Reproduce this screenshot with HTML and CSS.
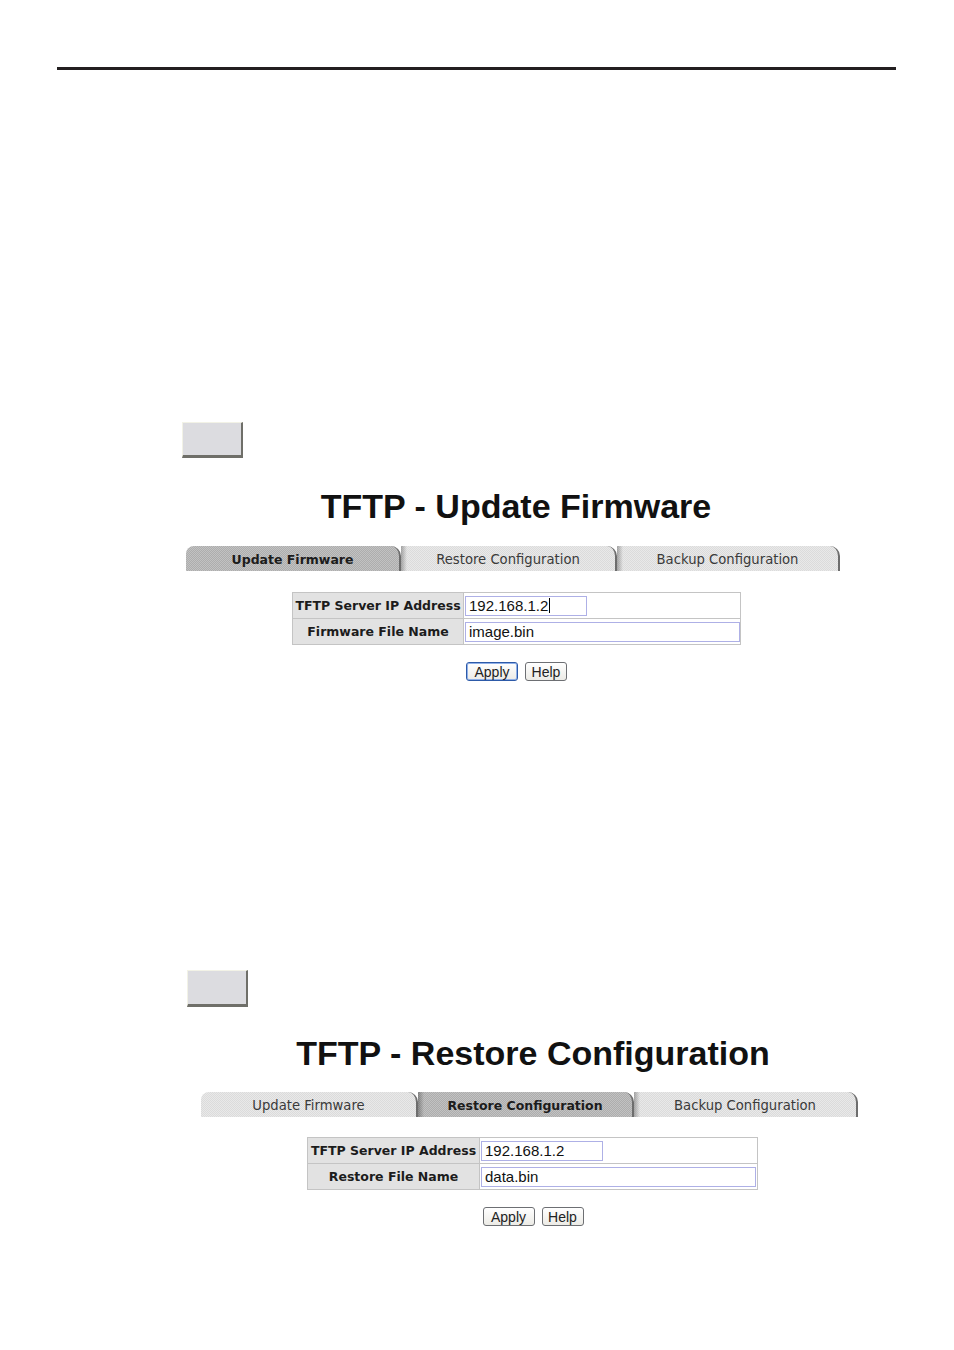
FILE: index.html
```html
<!DOCTYPE html>
<html>
<head>
<meta charset="utf-8">
<link rel="stylesheet" href="styles.css">
</head>
<body>
<div class="page">
  <div class="rule"></div>

  <section class="sec sec1">
    <div class="gbtn"></div>
    <div class="panel">
      <h1 class="title">TFTP - Update Firmware</h1>
      <div class="tabs">
        <div class="tab active">Update Firmware</div>
        <div class="tab">Restore Configuration</div>
        <div class="tab">Backup Configuration</div>
      </div>
      <div class="form">
        <div class="lbl">TFTP Server IP Address</div>
        <div class="val"><div class="inp short">192.168.1.2<span class="caret"></span></div></div>
        <div class="lbl last">Firmware File Name</div>
        <div class="val last"><div class="inp long">image.bin</div></div>
      </div>
      <div class="actions">
        <button class="btn focus">Apply</button>
        <button class="btn">Help</button>
      </div>
    </div>
  </section>

  <section class="sec sec2">
    <div class="gbtn"></div>
    <div class="panel">
      <h1 class="title">TFTP - Restore Configuration</h1>
      <div class="tabs">
        <div class="tab">Update Firmware</div>
        <div class="tab active">Restore Configuration</div>
        <div class="tab">Backup Configuration</div>
      </div>
      <div class="form">
        <div class="lbl">TFTP Server IP Address</div>
        <div class="val"><div class="inp short">192.168.1.2</div></div>
        <div class="lbl last">Restore File Name</div>
        <div class="val last"><div class="inp long">data.bin</div></div>
      </div>
      <div class="actions">
        <button class="btn">Apply</button>
        <button class="btn">Help</button>
      </div>
    </div>
  </section>
</div>
</body>
</html>
```

FILE: styles.css
```css
html, body {
  margin: 0;
  padding: 0;
  background: #ffffff;
}

.page {
  padding-top: 67px;
  width: 954px;
  height: 1283px;
  font-family: "Liberation Sans", Arial, sans-serif;
}

.rule {
  margin-left: 57px;
  width: 839px;
  height: 3px;
  background: #231f20;
}

.sec1 { margin-top: 352px; }
.sec2 { margin-top: 289px; }

.gbtn {
  box-sizing: border-box;
  width: 61px;
  height: 36px;
  background: #dcdce0;
  border-top: 1px solid #f2f2e6;
  border-left: 1px solid #f2f2e6;
  border-right: 2px solid #6f6f69;
  border-bottom: 3px solid #6f6f69;
}
.sec1 .gbtn { margin-left: 182px; }
.sec2 .gbtn { margin-left: 187px; height: 37px; }

.sec1 .panel { margin-left: 186px; width: 656px; }
.sec2 .panel { margin-left: 201px; width: 659px; }

.title {
  margin: 28px 0 0 0;
  padding-left: 4px;
  height: 40px;
  line-height: 40px;
  font-family: "Liberation Sans", Arial, sans-serif;
  font-weight: bold;
  font-size: 34px;
  color: #111111;
  text-align: center;
  white-space: nowrap;
}
.sec2 .title { margin-top: 26px; padding-left: 5px; }

.tabs {
  margin-top: 20px;
  display: grid;
  grid-template-columns: 215px 216px 1fr;
  height: 25px;
}
.sec2 .tabs { margin-top: 19px; grid-template-columns: 217px 216px 1fr; }

.tab {
  display: flex;
  align-items: center;
  justify-content: center;
  box-sizing: border-box;
  height: 25px;
  padding-top: 1px;
  font-family: "DejaVu Sans", Verdana, sans-serif;
  font-size: 13.2px;
  color: #3a3a3a;
  background-color: #e3e3e3;
  background-image:
    repeating-conic-gradient(rgba(0,0,0,0.035) 0 25%, rgba(255,255,255,0.2) 0 50%);
  background-size: 2px 2px;
  border-top-right-radius: 10px;
  border-right: 2px solid #6d6d6d;
  white-space: nowrap;
}
.tab:first-child { border-top-left-radius: 8px; }
.tab + .tab {
  background-image:
    linear-gradient(to right, rgba(0,0,0,0.28), rgba(0,0,0,0) 6px),
    repeating-conic-gradient(rgba(0,0,0,0.035) 0 25%, rgba(255,255,255,0.2) 0 50%);
  background-size: 100% 100%, 2px 2px;
}
.tab:last-child { margin-right: 2px; }
.tab.active {
  background-color: #b3b3b3;
  font-weight: bold;
  font-size: 12.5px;
  color: #1c1c1c;
}

.form {
  margin-top: 21px;
  margin-left: 106px;
  width: 449px;
  box-sizing: border-box;
  display: grid;
  grid-template-columns: 171px 1fr;
  border: 1px solid #c4c4c4;
}
.sec2 .form { margin-top: 20px; width: 451px; grid-template-columns: 172px 1fr; }

.lbl {
  box-sizing: border-box;
  height: 26px;
  display: flex;
  align-items: center;
  justify-content: center;
  background: #e2e2e2;
  border-right: 1px solid #c4c4c4;
  border-bottom: 1px solid #c4c4c4;
  font-family: "DejaVu Sans", Verdana, sans-serif;
  font-weight: bold;
  font-size: 12.5px;
  color: #1c1c1c;
  white-space: nowrap;
}
.val {
  box-sizing: border-box;
  height: 26px;
  display: flex;
  align-items: center;
  padding-left: 1px;
  border-bottom: 1px solid #c4c4c4;
}
.lbl.last, .val.last { border-bottom: none; height: 25px; }

.inp {
  box-sizing: border-box;
  height: 20px;
  border: 1px solid #aeb0e6;
  padding-left: 3px;
  font-family: "Liberation Sans", Arial, sans-serif;
  font-size: 15px;
  line-height: 18px;
  color: #111111;
  display: flex;
  align-items: center;
  white-space: nowrap;
}
.inp.short { width: 122px; }
.inp.long { width: 275px; }

.caret {
  display: inline-block;
  width: 1px;
  height: 15px;
  margin-left: 1px;
  background: #000000;
}

.actions {
  margin-top: 17px;
  display: flex;
  justify-content: center;
  gap: 7px;
  padding-left: 5px;
}

.btn {
  box-sizing: border-box;
  height: 19px;
  padding: 0 5px;
  border: 1px solid #6d6f73;
  border-radius: 3px;
  background: linear-gradient(#ffffff, #ecebe6);
  font-family: "Liberation Sans", Arial, sans-serif;
  font-size: 14px;
  line-height: 16px;
  color: #222222;
  min-width: 42px;
}
.btn.focus {
  border: 1px solid #2d5aa8;
  box-shadow: inset 0 0 0 1px #8fb0e8;
  min-width: 52px;
}
.sec2 .btn:first-child { min-width: 52px; }
```
